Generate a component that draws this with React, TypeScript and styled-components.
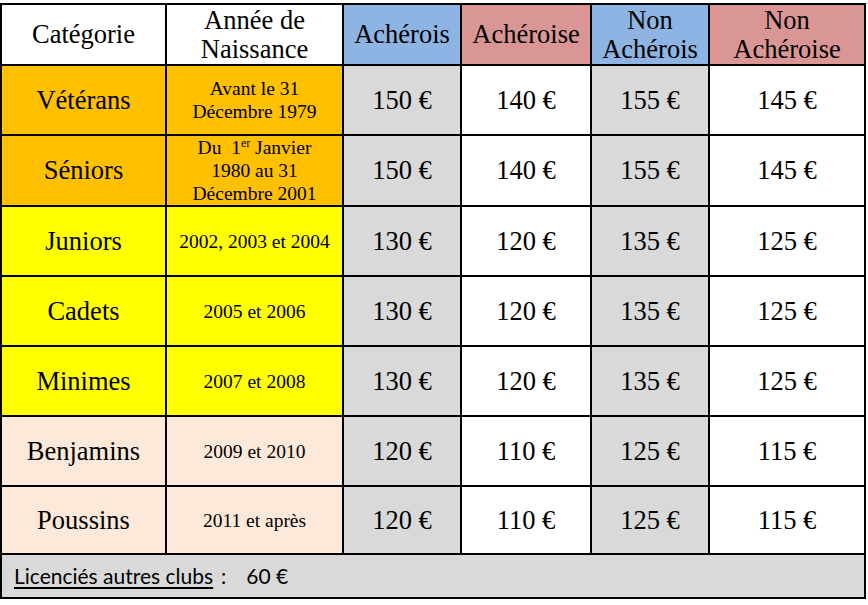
import React from 'react';
import styled, { createGlobalStyle } from 'styled-components';

type Tone = 'orange' | 'yellow' | 'peach';

interface Row {
  category: string;
  years: React.ReactNode;
  tone: Tone;
  prices: [number, number, number, number];
  height?: number;
}

const toneColors: Record<Tone, string> = {
  orange: '#ffc000',
  yellow: '#ffff00',
  peach: '#fde9d9',
};

// used inside the row data, so it has to exist before it
const Sup = styled.sup`
  font-size: 12px;
  vertical-align: 7px;
  line-height: 0;
`;

const rows: Row[] = [
  {
    category: 'Vétérans',
    years: (
      <>
        Avant le 31
        <br />
        Décembre 1979
      </>
    ),
    tone: 'orange',
    prices: [150, 140, 155, 145],
  },
  {
    category: 'Séniors',
    years: (
      <>
        Du&nbsp; 1<Sup>er</Sup> Janvier
        <br />
        1980 au 31
        <br />
        Décembre 2001
      </>
    ),
    tone: 'orange',
    prices: [150, 140, 155, 145],
  },
  { category: 'Juniors', years: '2002, 2003 et 2004', tone: 'yellow', prices: [130, 120, 135, 125] },
  { category: 'Cadets', years: '2005 et 2006', tone: 'yellow', prices: [130, 120, 135, 125] },
  { category: 'Minimes', years: '2007 et 2008', tone: 'yellow', prices: [130, 120, 135, 125] },
  { category: 'Benjamins', years: '2009 et 2010', tone: 'peach', prices: [120, 110, 125, 115] },
  { category: 'Poussins', years: '2011 et après', tone: 'peach', prices: [120, 110, 125, 115], height: 68 },
];

const priceShade = ['#d9d9d9', '#ffffff', '#d9d9d9', '#ffffff'];

const App = () => (
  <>
    <GlobalStyle />
    <Table>
      <colgroup>
        <col style={{ width: 165 }} />
        <col style={{ width: 177 }} />
        <col style={{ width: 118 }} />
        <col style={{ width: 130 }} />
        <col style={{ width: 118 }} />
        <col style={{ width: 156 }} />
      </colgroup>
      <thead>
        <HeadRow>
          <HeadCell $bg="#ffffff">Catégorie</HeadCell>
          <HeadCell $bg="#ffffff">
            Année de
            <br />
            Naissance
          </HeadCell>
          <HeadCell $bg="#8db4e2">Achérois</HeadCell>
          <HeadCell $bg="#da9694">Achéroise</HeadCell>
          <HeadCell $bg="#8db4e2">
            Non
            <br />
            Achérois
          </HeadCell>
          <HeadCell $bg="#da9694">
            Non
            <br />
            Achéroise
          </HeadCell>
        </HeadRow>
      </thead>
      <tbody>
        {rows.map((row) => (
          <BodyRow key={row.category} $height={row.height ?? 70}>
            <CategoryCell $bg={toneColors[row.tone]}>{row.category}</CategoryCell>
            <YearsCell $bg={toneColors[row.tone]}>{row.years}</YearsCell>
            {row.prices.map((price, i) => (
              <PriceCell key={i} $bg={priceShade[i]}>
                {price} €
              </PriceCell>
            ))}
          </BodyRow>
        ))}
        <FootRow>
          <FootCell colSpan={6}>
            <Underlined>Licenciés autres clubs</Underlined>
            <Colon>:</Colon>
            <FootPrice>60 €</FootPrice>
          </FootCell>
        </FootRow>
      </tbody>
    </Table>
  </>
);

export default App;

const GlobalStyle = createGlobalStyle`
  html, body {
    margin: 0;
    padding: 0;
    background: #ffffff;
  }
  body {
    padding-top: 3px;
    font-family: "Liberation Serif", "Times New Roman", serif;
    color: #000000;
  }
`;

const Table = styled.table`
  width: 864px;
  table-layout: fixed;
  border-collapse: collapse;
  margin-left: 0;
`;

const Cell = styled.td<{ $bg: string }>`
  border: 2px solid #000000;
  background: ${({ $bg }) => $bg};
  text-align: center;
  vertical-align: middle;
  padding: 0;
`;

const HeadRow = styled.tr`
  height: 61px;
`;

const HeadCell = styled(Cell).attrs({ as: 'th' })`
  font-weight: normal;
  font-size: 26.5px;
  line-height: 29px;
`;

const BodyRow = styled.tr<{ $height: number }>`
  height: ${({ $height }) => $height}px;
`;

const CategoryCell = styled(Cell)`
  font-size: 26.5px;
`;

const YearsCell = styled(Cell)`
  font-size: 19.5px;
  line-height: 23px;
`;

const PriceCell = styled(Cell)`
  font-size: 26.5px;
`;

const FootRow = styled.tr`
  height: 44px;
`;

const FootCell = styled.td`
  border: 2px solid #000000;
  background: #d9d9d9;
  text-align: left;
  padding: 0 0 2px 12px;
  font-family: "Lato", "Open Sans", sans-serif;
  font-size: 21px;
`;

const Underlined = styled.span`
  text-decoration: underline;
  text-decoration-thickness: 1.5px;
  text-underline-offset: 3px;
`;

const Colon = styled.span`
  margin-left: 8px;
`;

const FootPrice = styled.span`
  margin-left: 20px;
`;
